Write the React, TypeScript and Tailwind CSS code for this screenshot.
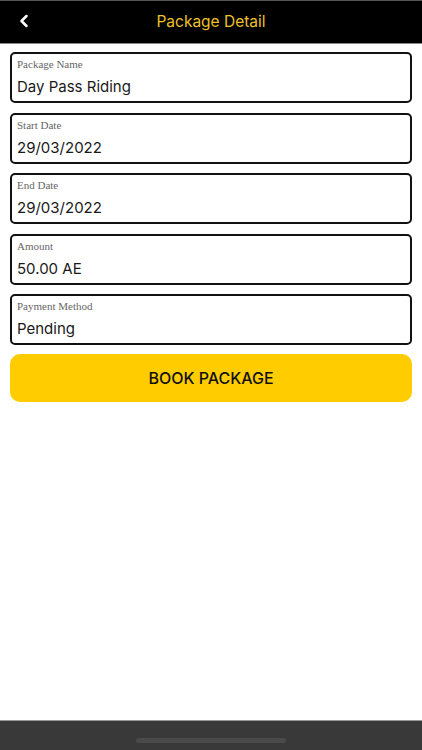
import { ChevronLeft } from "lucide-react";

const fields = [
  { label: "Package Name", value: "Day Pass Riding" },
  { label: "Start Date", value: "29/03/2022" },
  { label: "End Date", value: "29/03/2022" },
  { label: "Amount", value: "50.00 AE" },
  { label: "Payment Method", value: "Pending" },
];

function Field({ label, value }: { label: string; value: string }) {
  return (
    <div className="h-[51px] rounded-[5px] border-2 border-[#111] bg-white px-[5px] pt-[4px]">
      <div className="text-[11px] leading-[13px] text-[#666] font-['Liberation_Serif',serif]">
        {label}
      </div>
      <div className="mt-[7px] text-[15px] leading-[18px] text-[#1a1a1a]">{value}</div>
    </div>
  );
}

export default function App() {
  return (
    <div className="flex h-[750px] w-[422px] flex-col bg-white font-['Inter',sans-serif]">
      <header className="relative flex h-[44px] items-center justify-center border-t border-b border-t-[#555] border-b-[#888] bg-black">
        <button type="button" className="absolute left-[14px] top-[10px] text-white">
          <ChevronLeft className="h-[20px] w-[20px]" strokeWidth={3} />
        </button>
        <h1 className="text-[15.5px] font-normal text-[#eec12a]">Package Detail</h1>
      </header>

      <main className="flex flex-1 flex-col gap-[9.5px] px-[10px] pt-[8px]">
        {fields.map((f) => (
          <Field key={f.label} label={f.label} value={f.value} />
        ))}
        <button
          type="button"
          className="mt-[-1px] h-[48px] rounded-[10px] bg-[#ffcc00] text-[16px] font-medium text-[#111]"
        >
          BOOK PACKAGE
        </button>
      </main>

      <footer className="flex h-[30px] justify-center border-t border-t-[#999] bg-[#393939] pt-[17px]">
        <div className="h-[5px] w-[150px] rounded-full bg-[#4a4a4a]" />
      </footer>
    </div>
  );
}
